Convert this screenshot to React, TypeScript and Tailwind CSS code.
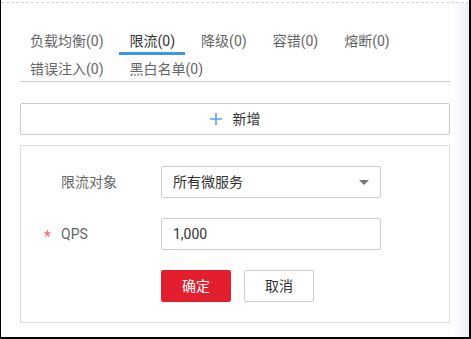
import React, { useState } from 'react';

const tabs = ['负载均衡(0)', '限流(0)', '降级(0)', '容错(0)', '熔断(0)', '错误注入(0)', '黑白名单(0)'];

const font = { fontFamily: 'Roboto, "Noto Sans CJK SC", sans-serif' };

export default function App() {
  const [active, setActive] = useState(1);
  const [qps, setQps] = useState('1,000');

  return (
    <div
      className="w-[471px] h-[339px] bg-white border-l border-r-2 border-b-2 border-black flex flex-col overflow-hidden"
      style={font}
    >
      <div className="mt-[2px] h-0 border-t border-dashed border-[#d4d6da]" />
      <div className="flex flex-1">
        <div className="w-[451px] pl-[19px] pr-[2px] pt-[24px]">
          {/* tabs */}
          <div className="flex flex-wrap w-[430px]">
            {tabs.map((t, i) => (
              <button
                key={t}
                type="button"
                onClick={() => setActive(i)}
                className={`relative h-[28px] leading-[28px] px-[10px] mr-[6px] text-[14px] ${
                  i === active ? 'text-[#333]' : 'text-[#666]'
                }`}
              >
                {t}
                {i === active && <span className="absolute -left-px right-0 bottom-0 h-[3px] bg-[#3b94ef]" />}
              </button>
            ))}
          </div>
          <div className="w-[430px] -mt-[2px] border-t border-[#cccccc]" />

          {/* add */}
          <button
            type="button"
            className="mt-[21px] w-[430px] h-[32px] border border-[#cacaca] rounded-[2px] flex items-center justify-center gap-[11px] text-[14px] text-[#333]"
          >
            <svg width="12" height="12" viewBox="0 0 12 12">
              <path d="M6 0v12M0 6h12" stroke="#5c9cf2" strokeWidth="1.6" />
            </svg>
            <span>新增</span>
          </button>

          {/* form */}
          <div className="mt-[10px] w-[430px] border border-[#dddddd] pt-[20px] pb-[20px] pl-[40px]">
            <div className="flex items-center">
              <label className="w-[100px] text-[14px] text-[#666]">限流对象</label>
              <div className="w-[220px] h-[32px] border border-[#cccccc] rounded-[2px] flex items-center justify-between pl-[11px] pr-[11px] text-[14px] text-[#333]">
                <span>所有微服务</span>
                <svg width="10" height="5" viewBox="0 0 10 5">
                  <path d="M0 0h10L5 5z" fill="#777" />
                </svg>
              </div>
            </div>
            <div className="flex items-center mt-[20px]">
              <label className="relative w-[100px] text-[14px] text-[#666]">
                <span className="absolute -left-[17px] top-[3px] text-[16px] leading-[20px] text-[#f26b6b]">*</span>
                QPS
              </label>
              <input
                value={qps}
                onChange={(e) => setQps(e.target.value)}
                className="w-[220px] h-[32px] border border-[#cccccc] rounded-[2px] px-[11px] text-[14px] text-[#333] outline-none"
              />
            </div>
            <div className="flex mt-[20px] pl-[100px] gap-[13px]">
              <button type="button" className="w-[70px] h-[32px] rounded-[2px] bg-[#e31f2e] text-white text-[14px]">
                确定
              </button>
              <button type="button" className="w-[70px] h-[32px] rounded-[2px] border border-[#cccccc] bg-white text-[#333] text-[14px]">
                取消
              </button>
            </div>
          </div>
        </div>
        <div className="flex-1 bg-gradient-to-r from-white to-[#eceef2]" />
      </div>
    </div>
  );
}
